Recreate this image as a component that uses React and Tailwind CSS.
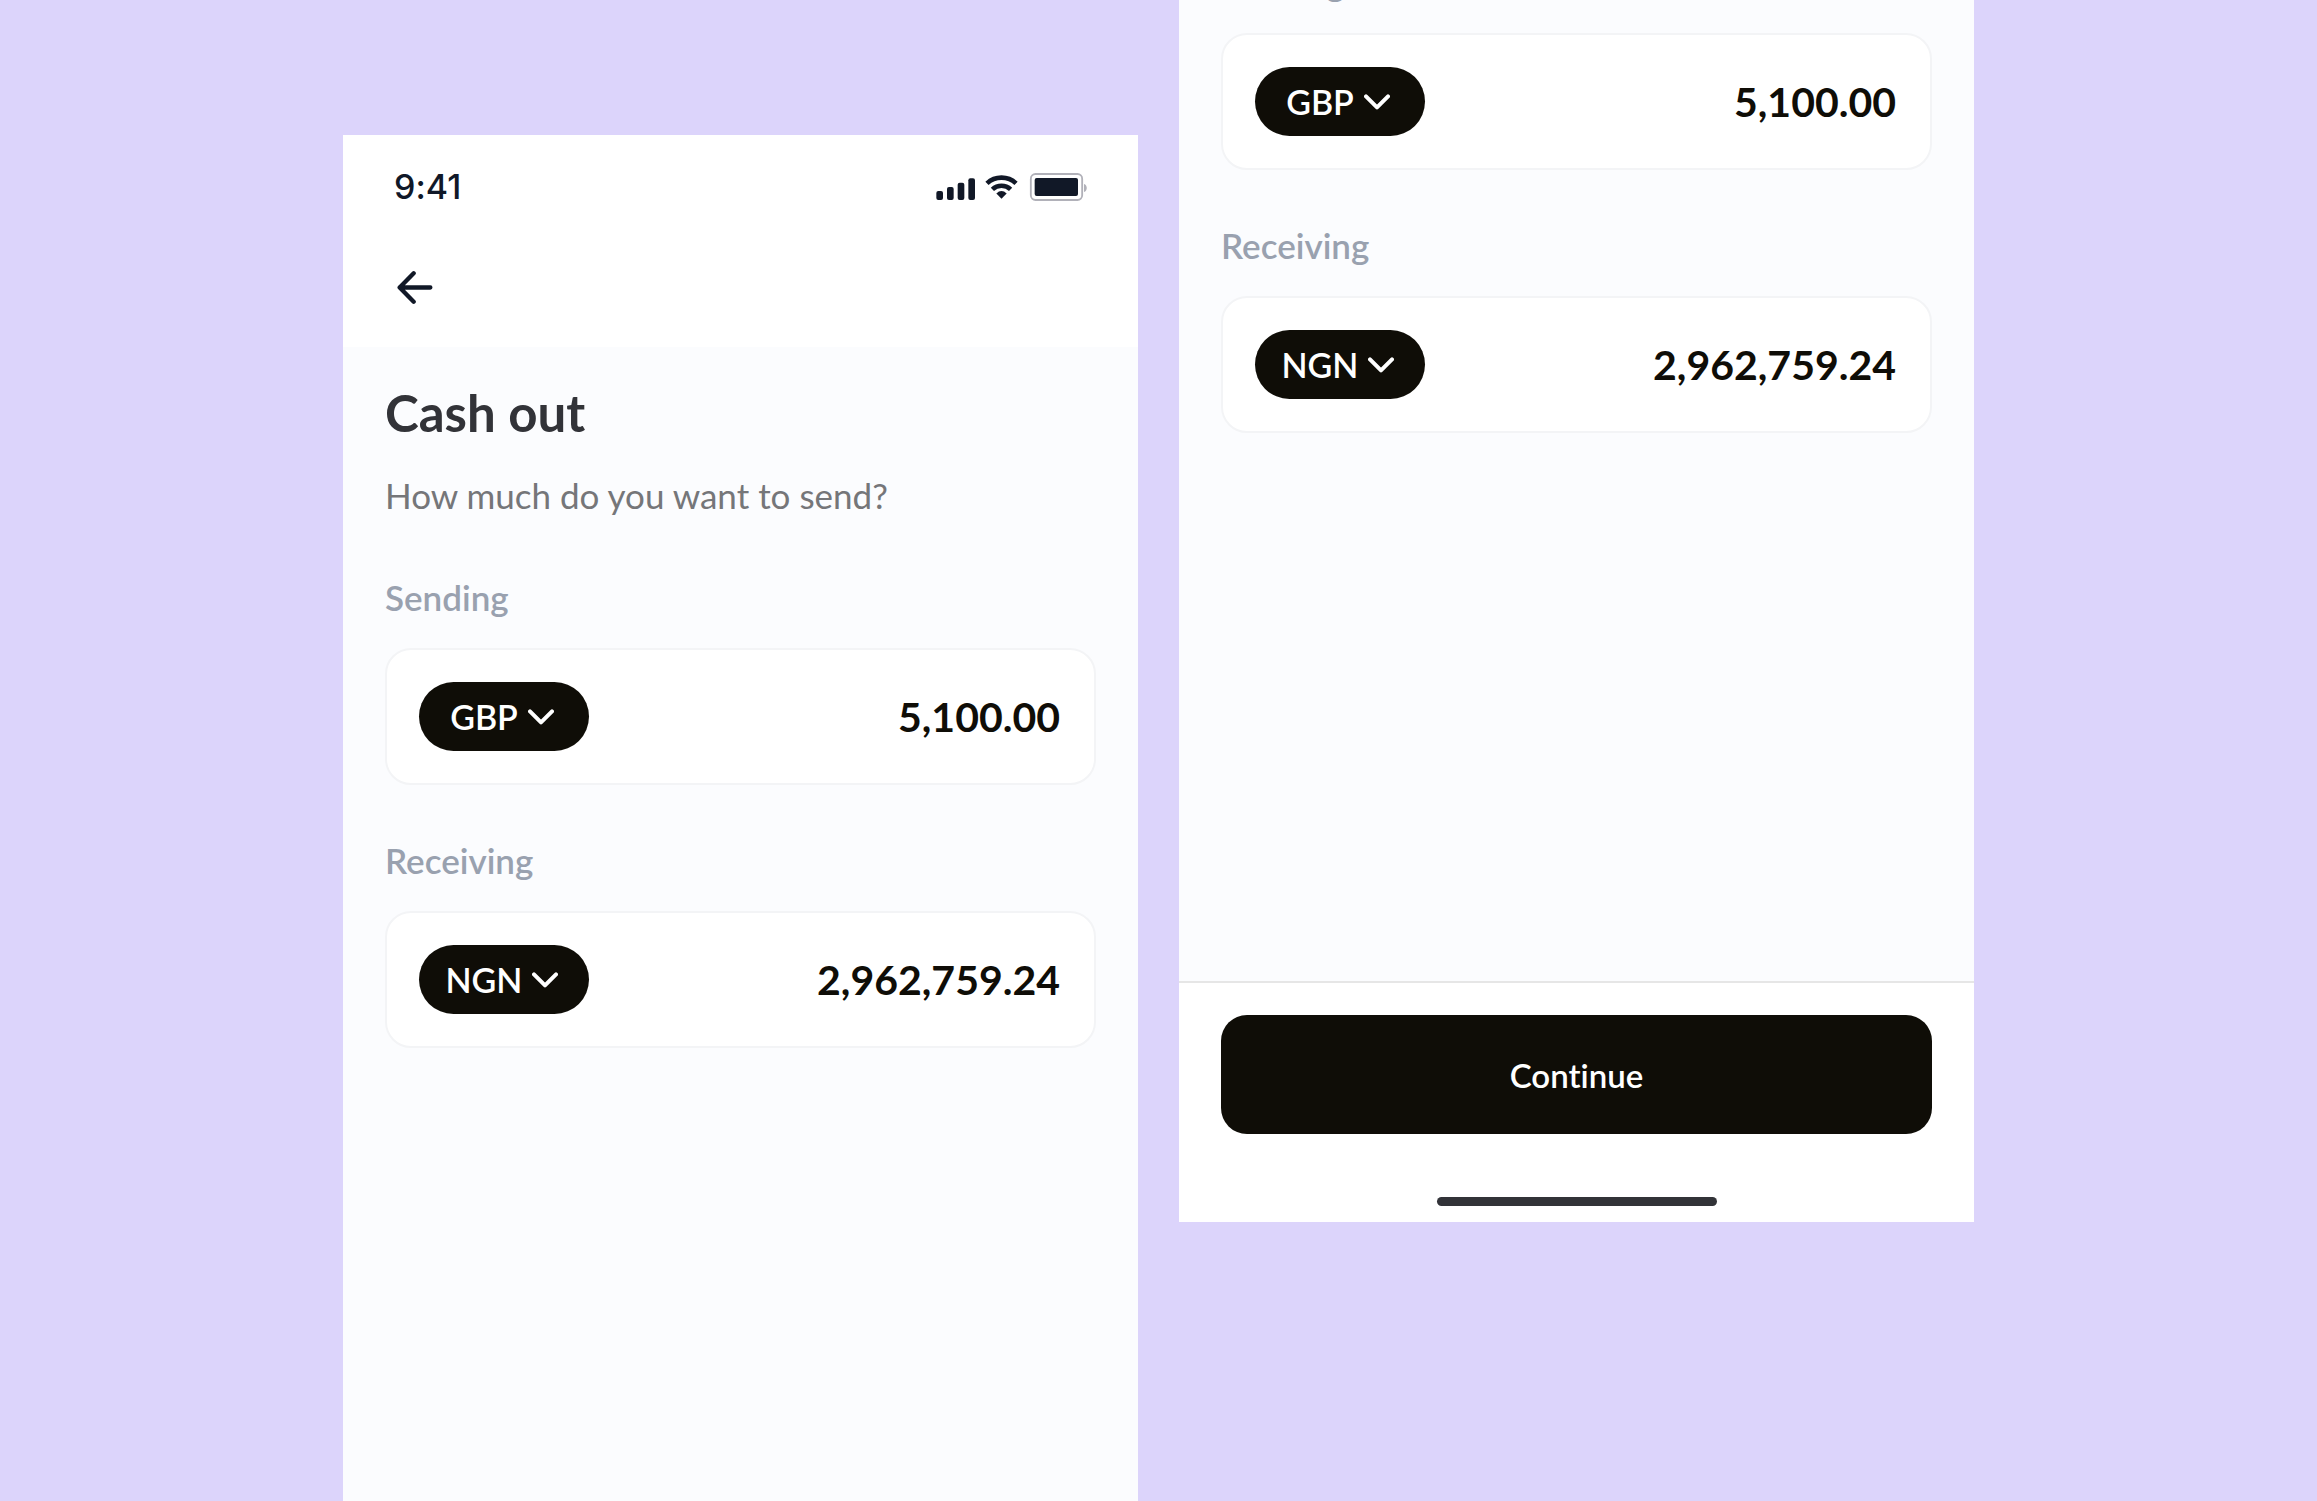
import { useState } from "react";

function StatusIcons() {
  return (
    <svg className="h-[30px] w-[152px]" viewBox="0 0 456 90" fill="none" role="img" aria-label="Signal, Wi-Fi and battery">
      <g fill="#111827">
        <rect x="1" y="57" width="20" height="27" rx="6" />
        <rect x="33" y="45" width="20" height="39" rx="6" />
        <rect x="65" y="32" width="20" height="52" rx="6" />
        <rect x="97" y="19" width="20" height="65" rx="6" />
        <path d="M196.500 80 L181 64.500 Q196.500 50 212 64.500 Z" />
        <rect x="296" y="18" width="130" height="54" rx="6" />
      </g>
      <g stroke="#111827" strokeWidth="14">
        <path d="M152.900 34 A64 64 0 0 1 240.100 34" />
        <path d="M169.200 52 A40 40 0 0 1 223.800 52" />
      </g>
      <rect x="284.500" y="6" width="154" height="78" rx="14" stroke="#b1b1b9" strokeWidth="5.500" />
      <path d="M444 36 C455 39 455 57 444 60 Z" fill="#b1b1b9" />
    </svg>
  );
}

function BackArrow() {
  return (
    <svg className="h-[33px] w-9" viewBox="0 0 108 99" fill="none" stroke="#111827" strokeWidth="13" strokeLinecap="round" strokeLinejoin="round" aria-hidden="true">
      <path d="M100 49.500 H8 M50 7 L8 49.500 L50 92" />
    </svg>
  );
}

function Chevron() {
  return (
    <svg className="pointer-events-none h-4 w-[26px] shrink-0" viewBox="0 0 78 48" fill="none" stroke="white" strokeWidth="12" strokeLinecap="round" strokeLinejoin="round" aria-hidden="true">
      <path d="M6 7 L39 40 L72 7" />
    </svg>
  );
}

function MoneyField({ id, label, currency, amount }) {
  const [code, setCode] = useState(currency);
  const [value, setValue] = useState(amount);
  return (
    <div>
      <label htmlFor={id} className="block text-[35px] leading-10 font-semibold text-gray-400">
        {label}
      </label>
      <div className="mt-[31px] flex items-center justify-between rounded-[26px] border-2 border-gray-100 bg-white py-8 pr-[34px] pl-8">
        <div className="flex h-[69px] w-[170px] shrink-0 items-center justify-center gap-2.5 rounded-full bg-[#0f0d07] pr-1 text-white">
          <select
            aria-label={`${label} currency`}
            value={code}
            onChange={(e) => setCode(e.target.value)}
            className="field-sizing-content appearance-none bg-transparent text-[34px] leading-10 font-semibold outline-none"
          >
            <option>GBP</option>
            <option>NGN</option>
          </select>
          <Chevron />
        </div>
        <input
          id={id}
          inputMode="decimal"
          value={value}
          onChange={(e) => setValue(e.target.value)}
          className="h-12 min-w-0 flex-1 bg-transparent text-right text-[41px] font-bold text-[#0f0d07] outline-none"
        />
      </div>
    </div>
  );
}

function MoneyForm({ name }) {
  return (
    <div className="flex flex-col gap-[55px]">
      <MoneyField id={`${name}-sending`} label="Sending" currency="GBP" amount="5,100.00" />
      <MoneyField id={`${name}-receiving`} label="Receiving" currency="NGN" amount="2,962,759.24" />
    </div>
  );
}

export default function App() {
  return (
    <div className="flex h-screen justify-center gap-[41px] overflow-hidden bg-[#dcd4fb] font-['Lato',sans-serif] [font-variant-ligatures:none]">
      <main className="mt-[135px] w-full max-w-[795px] bg-[#fbfcfe]">
        <header className="bg-white pt-8 pr-[50px] pb-[43px] pl-[51px]">
          <div className="flex h-10 items-center justify-between">
            <span className="font-['Inter',sans-serif] text-[34px] leading-10 font-medium text-gray-900">9:41</span>
            <StatusIcons />
          </div>
          <button type="button" aria-label="Back" className="mt-16 ml-[3px] block">
            <BackArrow />
          </button>
        </header>
        <div className="px-[42px] pt-9">
          <h1 className="text-[51px] leading-[60px] font-bold text-[#323338]">Cash out</h1>
          <p className="mt-8 mb-[62px] text-[35px] leading-10 text-[#757679]">How much do you want to send?</p>
          <MoneyForm name="top" />
        </div>
      </main>

      <section className="flex h-[1222px] w-full max-w-[795px] flex-col overflow-hidden bg-[#fbfcfe]">
        <div className="-mt-[38px] flex-1 px-[42px]">
          <MoneyForm name="bottom" />
        </div>
        <footer className="flex flex-col items-center border-t-2 border-[#e6e6e6] bg-white px-[42px] pt-8 pb-4">
          <button type="button" className="h-[119px] w-full rounded-[26px] bg-[#0f0d07] text-[33px] leading-10 font-semibold text-white">
            Continue
          </button>
          <div className="mt-[63px] h-[9px] w-[280px] rounded-full bg-[#323338]" />
        </footer>
      </section>
    </div>
  );
}
